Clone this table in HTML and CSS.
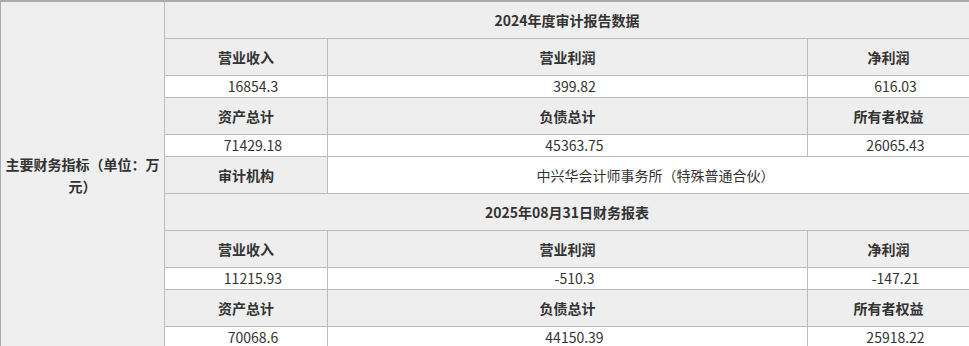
FILE: index.html
```html
<!DOCTYPE html>
<html lang="zh-CN">
<head>
<meta charset="utf-8">
<title>主要财务指标</title>
<link rel="stylesheet" href="styles.css">
</head>
<body>
<table class="fin">
  <colgroup>
    <col class="c-side">
    <col class="c-a">
    <col class="c-b">
    <col class="c-c">
  </colgroup>
  <tbody>
    <tr class="head">
      <td class="side" rowspan="11">主要财务指标（单位：万元）</td>
      <td colspan="3">2024年度审计报告数据</td>
    </tr>
    <tr class="label">
      <td>营业收入</td><td>营业利润</td><td>净利润</td>
    </tr>
    <tr class="value">
      <td>16854.3</td><td>399.82</td><td>616.03</td>
    </tr>
    <tr class="label">
      <td>资产总计</td><td>负债总计</td><td>所有者权益</td>
    </tr>
    <tr class="value">
      <td>71429.18</td><td>45363.75</td><td>26065.43</td>
    </tr>
    <tr class="audit">
      <td class="audit-label">审计机构</td><td colspan="2" class="audit-value">中兴华会计师事务所（特殊普通合伙）</td>
    </tr>
    <tr class="head">
      <td colspan="3">2025年08月31日财务报表</td>
    </tr>
    <tr class="label">
      <td>营业收入</td><td>营业利润</td><td>净利润</td>
    </tr>
    <tr class="value">
      <td>11215.93</td><td>-510.3</td><td>-147.21</td>
    </tr>
    <tr class="label">
      <td>资产总计</td><td>负债总计</td><td>所有者权益</td>
    </tr>
    <tr class="value">
      <td>70068.6</td><td>44150.39</td><td>25918.22</td>
    </tr>
  </tbody>
</table>
</body>
</html>
```

FILE: styles.css
```css
html, body {
  margin: 0;
  padding: 0;
  background: #ffffff;
}

.fin {
  width: 969px;
  table-layout: fixed;
  border-collapse: collapse;
  border-top: 2px solid #aaaaaa;
  font-family: "Noto Sans CJK SC", "Noto Sans", sans-serif;
  font-size: 14px;
  line-height: 21px;
  color: #333333;
}

.c-side { width: 164px; }
.c-a { width: 163px; }
.c-b { width: 480px; }
.c-c { width: 162px; }

.fin td {
  border: 1px solid #bcbcbc;
  text-align: center;
  vertical-align: middle;
  padding: 0;
  background: #eeeeee;
}

.fin td.side {
  border-left: 1px solid #aaaaaa;
  background: #efefef;
  font-weight: bold;
  line-height: 22px;
  padding: 0 2px;
}

.head td {
  font-weight: bold;
  height: 36px;
  padding: 0;
}

.label td {
  font-weight: bold;
  height: 36px;
}

.value td {
  background: #ffffff;
  height: 21px;
  padding-left: 14px;
}

.audit td.audit-label {
  font-weight: bold;
  height: 36px;
}

.audit td.audit-value {
  background: #ffffff;
  padding-left: 14px;
}
```
